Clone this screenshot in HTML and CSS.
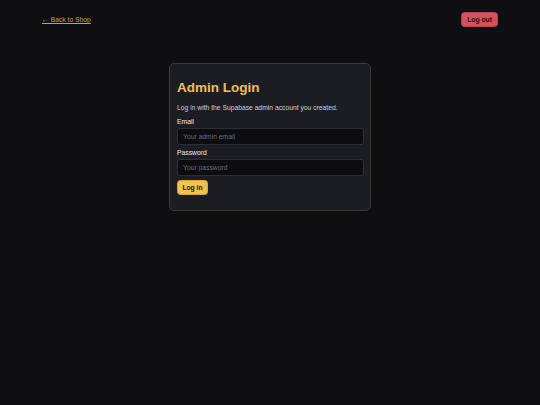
FILE: index.html
```html
<!DOCTYPE html>
<html lang="en">
<head>
<meta charset="utf-8">
<title>Admin Login</title>
<link rel="stylesheet" href="styles.css">
</head>
<body>
<header class="topbar">
  <a class="back-link" href="#">← Back to Shop</a>
  <button class="logout-btn" type="button">Log out</button>
</header>
<main class="main">
  <section class="card">
    <h1 class="card-title">Admin Login</h1>
    <p class="card-desc">Log in with the Supabase admin account you created.</p>
    <form class="login-form">
      <label class="field-label" for="email">Email</label>
      <input class="field-input" id="email" type="email" placeholder="Your admin email">
      <label class="field-label" for="password">Password</label>
      <input class="field-input" id="password" type="password" placeholder="Your password">
      <button class="login-btn" type="button">Log in</button>
    </form>
  </section>
</main>
</body>
</html>
```
FILE: styles.css
```css
html, body {
  margin: 0;
  padding: 0;
  background: #0e0e13;
  height: 100%;
}
body {
  font-family: "Liberation Sans", Arial, sans-serif;
  font-size: 6.75px;
  color: #e4e4e7;
}
.topbar {
  display: flex;
  justify-content: space-between;
  align-items: center;
  padding: 12px 42px 0 42px;
}
.back-link {
  color: #c9a449;
  text-decoration: underline;
  font-size: 6.75px;
}
.logout-btn {
  background: #d5525c;
  color: #2a0b0e;
  border: 1px solid #b9434d;
  border-radius: 3.5px;
  font-family: inherit;
  font-weight: bold;
  font-size: 6.75px;
  height: 15px;
  padding: 0 5px;
  line-height: 13px;
}
.main {
  display: flex;
  justify-content: center;
  padding-top: 36px;
}
.card {
  width: 202px;
  box-sizing: border-box;
  background: #1c1d23;
  border: 1px solid #3d3b36;
  border-radius: 5px;
  padding: 16px 7px 15px 7px;
}
.card-title {
  margin: 0;
  font-size: 13.5px;
  line-height: 16px;
  font-weight: bold;
  color: #f0c04c;
}
.card-desc {
  margin: 8px 0 0 0;
  line-height: 8px;
  color: #cfd0d5;
}
.login-form {
  display: flex;
  flex-direction: column;
  align-items: flex-start;
}
.field-label {
  display: block;
  margin-top: 6px;
  line-height: 8px;
  color: #f0f0f3;
  font-weight: normal;
}
.field-label + .field-input {
  margin-top: 2px;
}
.field-input + .field-label {
  margin-top: 4px;
}
.field-input {
  box-sizing: border-box;
  width: 187px;
  height: 17px;
  background: #0c0c11;
  border: 1px solid #2e2f36;
  border-radius: 3px;
  padding: 0 5px;
  font-family: inherit;
  font-size: 6.75px;
  color: #e4e4e7;
  outline: none;
}
.field-input::placeholder {
  color: #6c6d75;
}
.login-btn {
  margin-top: 4px;
  background: #f2c24f;
  color: #1b1607;
  border: 1px solid #d6a83a;
  border-radius: 3.5px;
  font-family: inherit;
  font-weight: bold;
  font-size: 6.75px;
  height: 15px;
  width: 31px;
  padding: 0;
  line-height: 13px;
}
```
